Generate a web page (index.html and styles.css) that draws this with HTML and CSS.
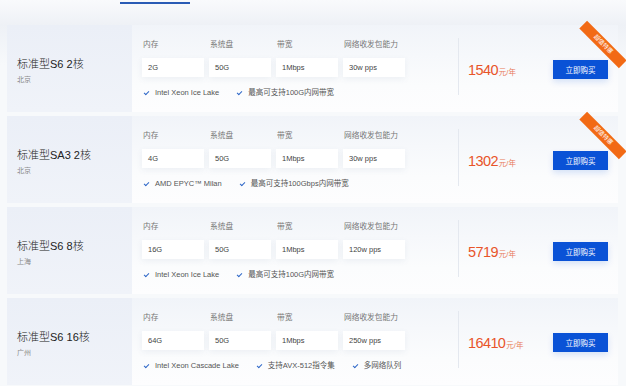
FILE: index.html
```html
<!DOCTYPE html>
<html lang="zh-CN">
<head>
    <meta charset="utf-8" />
    <title>云服务器</title>
    <link rel="stylesheet" href="styles.css">
</head>
<body>
    <div class="topbar"><span class="tab-line"></span></div>
    <div class="list">
        <div class="card">
            <div class="name"><h3>标准型S6 2核</h3><p>北京</p></div>
            <div class="spec">
                <div class="fields">
                    <div class="field"><label>内存</label><div class="box">2G</div></div>
                    <div class="field"><label>系统盘</label><div class="box">50G</div></div>
                    <div class="field"><label>带宽</label><div class="box">1Mbps</div></div>
                    <div class="field"><label>网络收发包能力</label><div class="box">30w pps</div></div>
                </div>
                <ul class="feats">
                    <li>Intel Xeon Ice Lake</li>
                    <li>最高可支持100G内网带宽</li>
                </ul>
            </div>
            <div class="buy">
                <div class="price"><b>1540</b><span>元/年</span></div>
                <button type="button">立即购买</button>
            </div>
            <div class="ribbon">超值特惠</div>
        </div>
        <div class="card">
            <div class="name"><h3>标准型SA3 2核</h3><p>北京</p></div>
            <div class="spec">
                <div class="fields">
                    <div class="field"><label>内存</label><div class="box">4G</div></div>
                    <div class="field"><label>系统盘</label><div class="box">50G</div></div>
                    <div class="field"><label>带宽</label><div class="box">1Mbps</div></div>
                    <div class="field"><label>网络收发包能力</label><div class="box">30w pps</div></div>
                </div>
                <ul class="feats">
                    <li>AMD EPYC™ Milan</li>
                    <li>最高可支持100Gbps内网带宽</li>
                </ul>
            </div>
            <div class="buy">
                <div class="price"><b>1302</b><span>元/年</span></div>
                <button type="button">立即购买</button>
            </div>
            <div class="ribbon">超值特惠</div>
        </div>
        <div class="card">
            <div class="name"><h3>标准型S6 8核</h3><p>上海</p></div>
            <div class="spec">
                <div class="fields">
                    <div class="field"><label>内存</label><div class="box">16G</div></div>
                    <div class="field"><label>系统盘</label><div class="box">50G</div></div>
                    <div class="field"><label>带宽</label><div class="box">1Mbps</div></div>
                    <div class="field"><label>网络收发包能力</label><div class="box">120w pps</div></div>
                </div>
                <ul class="feats">
                    <li>Intel Xeon Ice Lake</li>
                    <li>最高可支持100G内网带宽</li>
                </ul>
            </div>
            <div class="buy">
                <div class="price"><b>5719</b><span>元/年</span></div>
                <button type="button">立即购买</button>
            </div>
        </div>
        <div class="card">
            <div class="name"><h3>标准型S6 16核</h3><p>广州</p></div>
            <div class="spec">
                <div class="fields">
                    <div class="field"><label>内存</label><div class="box">64G</div></div>
                    <div class="field"><label>系统盘</label><div class="box">50G</div></div>
                    <div class="field"><label>带宽</label><div class="box">1Mbps</div></div>
                    <div class="field"><label>网络收发包能力</label><div class="box">250w pps</div></div>
                </div>
                <ul class="feats">
                    <li>Intel Xeon Cascade Lake</li>
                    <li>支持AVX-512指令集</li>
                    <li>多网络队列</li>
                </ul>
            </div>
            <div class="buy">
                <div class="price"><b>16410</b><span>元/年</span></div>
                <button type="button">立即购买</button>
            </div>
        </div>
    </div>
</body>
</html>
```

FILE: styles.css
```css
* { box-sizing: border-box; }
body { margin: 0; background: #f7f9fb; font-family: "Liberation Sans", "Noto Sans CJK SC", sans-serif; color: #333; overflow: hidden; }
.topbar { position: relative; height: 25px; background: linear-gradient(180deg, #f9fafc 0, #eef1f6 100%); }
.tab-line { position: absolute; left: 120px; top: 2px; width: 70px; height: 2px; background: #2a5bb5; }
.list { display: flex; flex-direction: column; gap: 4px; padding: 0 8px 0 7px; background: linear-gradient(180deg, #eef1f6 0, #f7f9fb 40px); }
.card { position: relative; display: flex; height: 87px; background: linear-gradient(180deg, #f1f4f9 0, #fbfcfd 70%, #fdfdfe 100%); }
.name { width: 125px; display: flex; flex-direction: column; justify-content: center; padding: 3px 0 0 10px; background: linear-gradient(180deg, #ebeff7 0, #f0f3f9 100%); }
.name h3 { margin: 0; font-size: 11px; font-weight: 300; line-height: 16px; color: #222; }
.name p { margin: 3px 0 0; font-size: 7px; line-height: 10px; color: #888; }
.spec { width: 326px; padding: 14px 0 0 10px; }
.fields { display: flex; gap: 5px; }
.field label { display: block; font-size: 7.7px; line-height: 11px; color: #777; padding-left: 1px; }
.field .box { margin-top: 8px; width: 62px; height: 19px; line-height: 19px; padding-left: 6px; font-size: 7.5px; color: #444; background: #fff; box-shadow: 0 2px 6px rgba(80, 100, 140, 0.08); }
.feats { display: flex; margin: 11px 0 0; padding: 0; list-style: none; }
.feats li { position: relative; padding-left: 13px; margin-right: 16px; font-size: 7.5px; line-height: 10px; color: #555; }
.feats li::before { content: ""; position: absolute; left: 3px; top: 2px; width: 2px; height: 4px; border: solid #2f68c8; border-width: 0 1.3px 1.3px 0; transform: rotate(45deg); }
.buy { flex: 1; display: flex; align-items: center; justify-content: space-between; margin: 13px 0 17px; padding: 6px 10px 0 9px; border-left: 1px solid #e4e8ef; }
.price { color: #e8542a; white-space: nowrap; }
.price b { font-weight: normal; font-size: 14.5px; letter-spacing: -0.6px; }
.price span { font-size: 7.5px; margin-left: 1px; color: #e87a58; }
.buy button { width: 55px; height: 19px; border: 0; padding: 0; background: #0a52d6; color: #fff; font-family: inherit; font-size: 7.5px; box-shadow: 0 3px 6px rgba(10, 82, 214, 0.15); }
.ribbon { position: absolute; right: -13px; top: 14px; width: 56px; height: 11px; line-height: 11px; text-align: center; background: #f26a15; color: #fff; font-size: 6px; transform: rotate(45deg); }
```
